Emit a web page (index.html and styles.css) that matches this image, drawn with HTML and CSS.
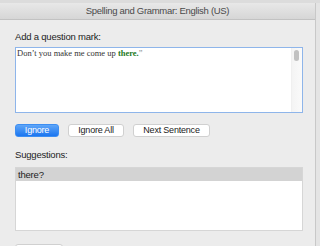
FILE: index.html
```html
<!DOCTYPE html>
<html lang="en">
<head>
    <meta charset="UTF-8">
    <title>Spelling and Grammar</title>
    <link rel="stylesheet" href="styles.css">
</head>
<body>
    <div class="desktop">
        <div class="toolbar-strip"></div>
        <div class="dialog">
            <div class="titlebar">Spelling and Grammar: English (US)</div>
            <div class="dialog-body">
                <div class="label">Add a question mark:</div>
                <div class="sentence-box">
                    <div class="sentence">Don’t you make me come up <span class="fix">there.</span><span class="quote">”</span></div>
                    <div class="scroll-track"><div class="scroll-thumb"></div></div>
                </div>

                <div class="button-row">
                    <button class="btn btn-primary">Ignore</button>
                    <button class="btn btn-all">Ignore All</button>
                    <button class="btn btn-next">Next Sentence</button>
                </div>

                <div class="label label-suggestions">Suggestions:</div>
                <div class="suggestion-list">
                    <div class="suggestion selected">there?</div>
                </div>

                <div class="bottom-row">
                    <button class="btn btn-cut"></button>
                </div>
            </div>
        </div>
    </div>
</body>
</html>
```

FILE: styles.css
```css
body {
    margin: 0;
    background-color: #e6e6e6;
    font-family: "Liberation Sans", Arial, sans-serif;
    overflow: hidden;
}

.desktop {
    width: 320px;
    height: 246px;
    background-color: #e4e4e4;
}

.toolbar-strip {
    height: 3px;
    background-color: #dcdcdc;
}

.dialog {
    width: 316px;
    height: 243px;
    background-color: #ececec;
    border-right: 1px solid #c8c8c8;
    box-sizing: border-box;
    overflow: hidden;
}

.titlebar {
    height: 16px;
    line-height: 16px;
    text-align: center;
    font-size: 9.5px;
    letter-spacing: -0.3px;
    color: #4a4a4a;
    background: linear-gradient(#e8e8e8, #d6d6d6);
    border-bottom: 1px solid #c2c2c2;
}

.dialog-body {
    padding: 10px 12px 0 15px;
}

.label {
    font-size: 9.5px;
    letter-spacing: -0.2px;
    color: #222;
    line-height: 14px;
}

.sentence-box {
    display: flex;
    margin-top: 3px;
    height: 66px;
    background-color: #fff;
    border: 1px solid #8eb5ea;
    box-sizing: border-box;
}

.sentence {
    flex: 1;
    padding: 1px 1px;
    font-family: "Liberation Serif", "Times New Roman", serif;
    font-size: 8.5px;
    line-height: 9px;
    color: #333;
}

.fix {
    color: #1e7a1e;
    font-weight: bold;
}

.quote {
    color: #888;
}

.scroll-track {
    width: 10px;
    background: linear-gradient(90deg, #f4f4f4, #fafafa);
    border-left: 1px solid #f0f0f0;
    padding-top: 2px;
}

.scroll-thumb {
    width: 5px;
    height: 11px;
    margin-left: 2px;
    border-radius: 3px;
    background-color: #c1c1c1;
}

.button-row {
    display: flex;
    gap: 9px;
    margin-top: 11px;
}

.btn {
    height: 13px;
    padding: 0;
    font-family: "Liberation Sans", Arial, sans-serif;
    font-size: 9px;
    letter-spacing: -0.2px;
    line-height: 11px;
    color: #222;
    background-color: #fff;
    border: 1px solid #d0d0d0;
    border-radius: 3px;
    box-sizing: border-box;
}

.btn-primary {
    width: 44px;
    color: #fff;
    background: linear-gradient(#5fa6f8, #1b76f0);
    border-color: #3d8ef2;
}

.btn-all {
    width: 56px;
}

.btn-next {
    width: 77px;
}

.label-suggestions {
    margin-top: 11px;
}

.suggestion-list {
    margin-top: 5px;
    height: 64px;
    background-color: #fff;
    border: 1px solid #d6d6d6;
    box-sizing: border-box;
}

.suggestion {
    height: 13px;
    line-height: 13px;
    padding-left: 2px;
    font-size: 9.5px;
    letter-spacing: -0.2px;
    color: #222;
}

.suggestion.selected {
    background-color: #d3d3d3;
}

.bottom-row {
    margin-top: 11px;
}

.btn-cut {
    width: 48px;
}
```
